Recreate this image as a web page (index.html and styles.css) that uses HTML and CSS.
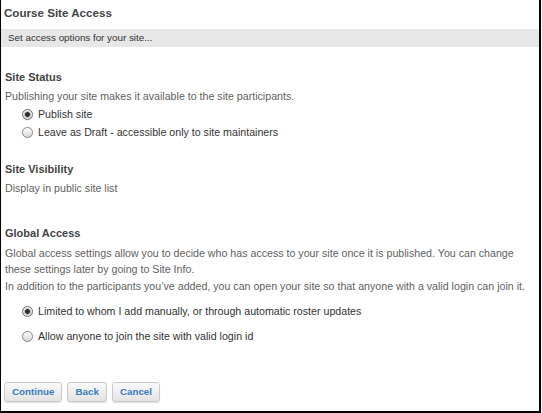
FILE: index.html
```html
<!DOCTYPE html>
<html>
<head>
<meta charset="utf-8">
<link rel="stylesheet" href="styles.css">
</head>
<body>
<div class="frame">
  <div class="title">Course Site Access</div>
  <div class="bar">Set access options for your site...</div>

  <div class="heading h-status">Site Status</div>
  <p class="text t-first">Publishing your site makes it available to the site participants.</p>
  <div class="radios r-status">
    <div class="radio-row"><span class="radio checked"></span><span class="label">Publish site</span></div>
    <div class="radio-row"><span class="radio"></span><span class="label">Leave as Draft - accessible only to site maintainers</span></div>
  </div>

  <div class="heading h-vis">Site Visibility</div>
  <p class="text t-first">Display in public site list</p>

  <div class="heading h-global">Global Access</div>
  <p class="text t-global">Global access settings allow you to decide who has access to your site once it is published. You can change these settings later by going to Site Info.</p>
  <p class="text t-add">In addition to the participants you’ve added, you can open your site so that anyone with a valid login can join it.</p>
  <div class="radios r-global">
    <div class="radio-row"><span class="radio checked"></span><span class="label">Limited to whom I add manually, or through automatic roster updates</span></div>
    <div class="radio-row gap"><span class="radio"></span><span class="label">Allow anyone to join the site with valid login id</span></div>
  </div>

  <div class="buttons">
    <button class="btn">Continue</button>
    <button class="btn">Back</button>
    <button class="btn">Cancel</button>
  </div>
</div>
</body>
</html>
```

FILE: styles.css
```css
html, body {
  margin: 0;
  padding: 0;
  background: #fff;
}
body {
  width: 542px;
  height: 413px;
  overflow: hidden;
  font-family: "Liberation Sans", Arial, Helvetica, sans-serif;
}
.frame {
  box-sizing: border-box;
  width: 541px;
  height: 413px;
  border-left: 1px solid #000;
  border-right: 2px solid #000;
  border-bottom: 2px solid #000;
  background: #fff;
}
.title {
  padding: 5px 0 0 3px;
  font-size: 11.6px;
  line-height: 16px;
  font-weight: bold;
  color: #444;
}
.bar {
  margin-top: 8px;
  height: 18px;
  line-height: 18px;
  background: #e7e7e7;
  padding-left: 7px;
  font-size: 9.8px;
  color: #333;
}
.heading {
  padding-left: 4px;
  font-size: 11px;
  line-height: 16px;
  font-weight: bold;
  color: #444;
}
.h-status { margin-top: 22px; }
.h-vis { margin-top: 20px; }
.h-global { margin-top: 29px; }
.text {
  margin: 0;
  padding-left: 4px;
  padding-right: 4px;
  font-size: 10.65px;
  line-height: 16px;
  color: #5f5f5f;
}
.t-first { margin-top: 3px; }
.t-global { margin-top: 4px; }
.t-add { margin-top: 1px; }
.radios {
  display: flex;
  flex-direction: column;
  padding-left: 21px;
}
.r-status { margin-top: 1px; }
.r-global { margin-top: 8px; }
.radio-row {
  display: flex;
  align-items: center;
  height: 18px;
}
.radio-row.gap { margin-top: 7px; }
.radio {
  box-sizing: border-box;
  width: 11px;
  height: 11px;
  border-radius: 50%;
  border: 1px solid #8a8a8a;
  background: linear-gradient(#ffffff, #d6d6d6);
  box-shadow: inset 0 1px 1px rgba(255,255,255,0.8), 0 0 0 0.5px rgba(0,0,0,0.08);
  flex: none;
}
.radio.checked {
  border-color: #6e6e6e;
  background: radial-gradient(circle, #2b2b2b 0 2px, #9a9a9a 2.6px, #e8e8e8 3.6px, #c4c4c4 100%);
}
.label {
  margin-left: 5px;
  font-size: 10.65px;
  color: #333;
  line-height: 18px;
}
.buttons {
  display: flex;
  gap: 5px;
  margin-top: 37px;
  padding-left: 3px;
}
.btn {
  box-sizing: border-box;
  height: 20px;
  padding: 0 7px;
  font-family: "Liberation Sans", Arial, sans-serif;
  font-size: 9.8px;
  font-weight: bold;
  color: #3b7bbb;
  background: linear-gradient(#fafafa, #e3e3e3);
  border: 1px solid #cacaca;
  border-radius: 3px;
  box-shadow: 0 1px 1px rgba(0,0,0,0.12);
  line-height: 18px;
}
```
